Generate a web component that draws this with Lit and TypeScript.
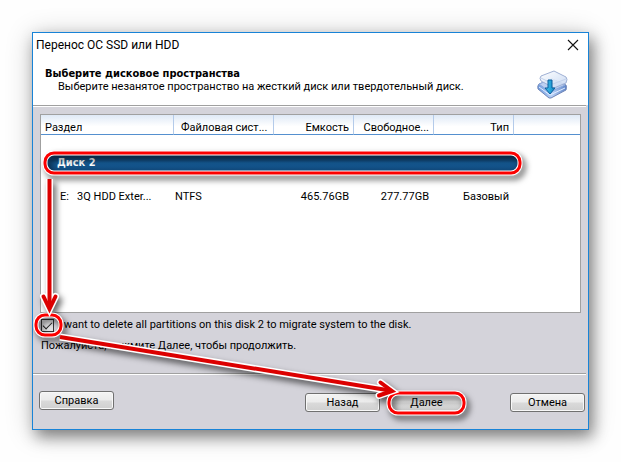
import { LitElement, html, css, svg } from "lit";
import { customElement } from "lit/decorators.js";

interface Partition {
  name: string;
  fs: string;
  size: string;
  free: string;
  type: string;
}

const PARTITIONS: Partition[] = [
  { name: "E:\u00a0\u00a0 3Q HDD Exter...", fs: "NTFS", size: "465.76GB", free: "277.77GB", type: "Базовый" },
];

@customElement("disk-icon")
class DiskIcon extends LitElement {
  static styles = css`
    :host { display: block; width: 32px; height: 32px; }
    svg { display: block; }
  `;
  render() {
    return html`<svg width="32" height="32" viewBox="0 0 32 32" aria-hidden="true">
      <defs>
        <linearGradient id="top" x1="0" y1="0" x2="1" y2="1">
          <stop offset="0" stop-color="#ffffff" /><stop offset="1" stop-color="#c3d5f1" />
        </linearGradient>
        <linearGradient id="side" x1="0" y1="0" x2="1" y2="0">
          <stop offset="0" stop-color="#6d9ade" /><stop offset=".5" stop-color="#b8d0f5" /><stop offset="1" stop-color="#5b83c8" />
        </linearGradient>
        <linearGradient id="arrow" x1="0" y1="0" x2="1" y2="0">
          <stop offset="0" stop-color="#45c5ee" /><stop offset="1" stop-color="#0d85c4" />
        </linearGradient>
      </defs>
      <path d="M2 14 L15 9 L29 15 Q30 17 29 20 L14 28 L12 28 L1 19 Q0 16 2 14 Z" fill="url(#side)" stroke="#7187b8" />
      <path d="M2 14 L15 9 L28 15 L13 22 Z" fill="#bcd0f2" stroke="#8da9dc" />
      <path d="M2 17 L13 25 L28 18" fill="none" stroke="#e3edff" />
      <path d="M4 6 L17 1 L29 7 Q31 9 29 13 L17 18 L4 11 Q2 8 4 6 Z" fill="url(#top)" fill-opacity=".9" stroke="#9fb0d4" />
      <path d="M4 8 L16 14 L29 9" fill="none" stroke="#c3d2ec" />
      <path d="M11 10 H15 V18 H18 L13 24 L8 18 H11 Z" fill="url(#arrow)" stroke="#0b5f9c" />
    </svg>`;
  }
}

@customElement("app-root")
class AppRoot extends LitElement {
  static styles = css`
    :host {
      display: block;
      box-sizing: border-box;
      min-height: 100vh;
      padding: 32px;
      background: #fefefe;
      color: #000;
      font: 11px/14px Roboto, "Liberation Sans", sans-serif;
    }
    .window {
      position: relative;
      border: 1px solid #1883d7;
      background: #d4d3da;
      box-shadow: 4px 7px 14px rgba(0, 0, 0, 0.42), 0 3px 26px rgba(0, 0, 0, 0.2);
    }
    header { background: #fff; }
    .titlebar {
      display: flex;
      align-items: center;
      justify-content: space-between;
      height: 24px;
      padding: 0 8px 0 3px;
      font-size: 12px;
    }
    .close {
      width: 14px;
      height: 14px;
      padding: 0;
      border: 0;
      background: none;
    }
    .close svg { display: block; }
    .intro {
      display: flex;
      justify-content: space-between;
      height: 48px;
      padding: 0 19px 0 12px;
    }
    h1, p { margin: 0; }
    h1 {
      padding-top: 10px;
      font: bold 11px/14px "DejaVu Sans Condensed", "DejaVu Sans", sans-serif;
    }
    .intro p { padding-left: 13px; line-height: 12px; }
    .intro disk-icon { margin-top: 13px; }
    .rule {
      height: 1px;
      margin: 0 2px 0 0;
      border: 0;
      background: #a0a0a0;
      border-bottom: 1px solid #fff;
    }
    .list {
      min-height: 197px;
      margin: 7px 7px 0;
      border: 1px solid #a0a0a0;
      background: #fff;
    }
    table {
      width: 100%;
      table-layout: fixed;
      border-collapse: separate;
      border-spacing: 0;
    }
    .c-name { width: 133px; }
    .c-fs { width: 100px; }
    .c-num { width: 80px; }
    th {
      box-sizing: border-box;
      height: 20px;
      padding: 6px 4px 0;
      border-right: 1px solid #b4cbea;
      border-bottom: 1px solid #5590cf;
      background: linear-gradient(#dfe9f6, #fff 60%);
      font-weight: normal;
      line-height: 13px;
      text-align: left;
      white-space: nowrap;
    }
    th.num, td.num { text-align: right; }
    th:last-child { border-right: 0; }
    th.fs { padding-left: 7px; }
    .group td { padding: 18px 0 0 6px; }
    .disk {
      width: 471px;
      height: 18px;
      box-sizing: border-box;
      padding-left: 10px;
      border-radius: 6px;
      background: linear-gradient(#0c3054, #155a94 55%, #114a7e);
      color: #fff;
      font: bold 11px/20px "DejaVu Sans Condensed", "DejaVu Sans", sans-serif;
    }
    .part td { padding: 19px 5px 0 1px; white-space: nowrap; }
    .part td:first-child { padding-left: 19px; }
    .agree {
      display: flex;
      align-items: center;
      gap: 4px;
      height: 14px;
      margin: 5px 8px 0;
      line-height: 16px;
    }
    .agree input {
      appearance: none;
      box-sizing: border-box;
      flex: none;
      width: 13px;
      height: 13px;
      margin: 0;
      border: 1px solid #333;
      background: #e4e4e6;
    }
    .tick:checked::after {
      content: "";
      display: block;
      box-sizing: border-box;
      width: 9px;
      height: 5px;
      margin: 2px 0 0 1px;
      border-left: 1px solid #222;
      border-bottom: 1px solid #222;
      rotate: -45deg;
    }
    .hint { margin: 7px 8px 20px; }
    footer {
      display: flex;
      gap: 5px;
      align-items: flex-start;
      padding: 16px 3px 17px 6px;
    }
    footer button {
      box-sizing: border-box;
      width: 75px;
      height: 19px;
      padding: 1px 0 0;
      border: 1px solid #707070;
      border-radius: 3px;
      background: linear-gradient(#f4f4f4, #ebebeb 48%, #dadada 52%, #cfcfcf);
      box-shadow: inset 0 0 0 1px #f8f8f8;
      color: #000;
      font: inherit;
      line-height: 16px;
    }
    .nav { margin-top: 2px; }
    .back { margin-left: auto; }
    .next { margin-left: 4px; }
    .cancel { margin-left: 41px; }
    .marks {
      position: absolute;
      left: -1px;
      top: -1px;
      overflow: visible;
      pointer-events: none;
      filter: drop-shadow(3px 4px 3px rgba(0, 0, 0, 0.6));
    }
  `;

  private marks() {
    const lines = svg`
      <path d="M17.5 147 V274" />
      <path d="M28 305 L358 358.5" />`;
    const heads = svg`
      <path d="M11.5 264.5 L17.5 277 L23.5 264.5" />
      <path d="M348.5 350.5 L360 359 L347 363.5" />`;
    const rings = svg`
      <rect x="13" y="121" width="475" height="20" rx="9" />
      <rect x="4" y="283" width="25" height="20" rx="9" />
      <rect x="357" y="361" width="75" height="20" rx="9" />`;
    return html`<svg class="marks" width="557" height="398" fill="none" stroke-linejoin="miter" aria-hidden="true">
      <g stroke="#fff" stroke-width="5">${rings}</g>
      <g stroke="#fb0000" stroke-width="3">${rings}</g>
      <g stroke="#fff"><g stroke-width="7">${lines}</g><g stroke-width="7" stroke-linecap="round">${heads}</g></g>
      <g stroke="#dc0000"><g stroke-width="4">${lines}</g><g stroke-width="4" stroke-linecap="round">${heads}</g></g>
    </svg>`;
  }

  render() {
    return html`
      <main class="window">
        <header>
          <div class="titlebar">
            <span>Перенос ОС SSD или HDD</span>
            <button class="close" aria-label="Закрыть">
              <svg width="14" height="14" viewBox="0 0 14 14"><path d="M2 2 L12 12 M12 2 L2 12" stroke="#111" stroke-width="1.1" /></svg>
            </button>
          </div>
          <div class="intro">
            <div>
              <h1>Выберите дисковое пространства</h1>
              <p>Выберите незанятое пространство на жесткий диск или твердотельный диск.</p>
            </div>
            <disk-icon></disk-icon>
          </div>
        </header>
        <hr class="rule" />
        <div class="list">
          <table>
            <colgroup>
              <col class="c-name" /><col class="c-fs" /><col class="c-num" /><col class="c-num" /><col class="c-num" /><col />
            </colgroup>
            <thead>
              <tr>
                <th>Раздел</th>
                <th class="fs">Файловая сист...</th>
                <th class="num">Емкость</th>
                <th class="num">Свободное...</th>
                <th class="num">Тип</th>
                <th></th>
              </tr>
            </thead>
            <tbody>
              <tr class="group"><td colspan="6"><div class="disk">Диск 2</div></td></tr>
              ${PARTITIONS.map(
                (p) => html`<tr class="part">
                  <td>${p.name}</td>
                  <td>${p.fs}</td>
                  <td class="num">${p.size}</td>
                  <td class="num">${p.free}</td>
                  <td class="num">${p.type}</td>
                  <td></td>
                </tr>`
              )}
            </tbody>
          </table>
        </div>
        <label class="agree">
          <input type="checkbox" class="tick" checked />
          <span>I want to delete all partitions on this disk 2 to migrate system to the disk.</span>
        </label>
        <p class="hint">Пожалуйста, нажмите Далее, чтобы продолжить.</p>
        <hr class="rule" />
        <footer>
          <button>Справка</button>
          <button class="nav back">Назад</button>
          <button class="nav next">Далее</button>
          <button class="nav cancel">Отмена</button>
        </footer>
        ${this.marks()}
      </main>
    `;
  }
}
